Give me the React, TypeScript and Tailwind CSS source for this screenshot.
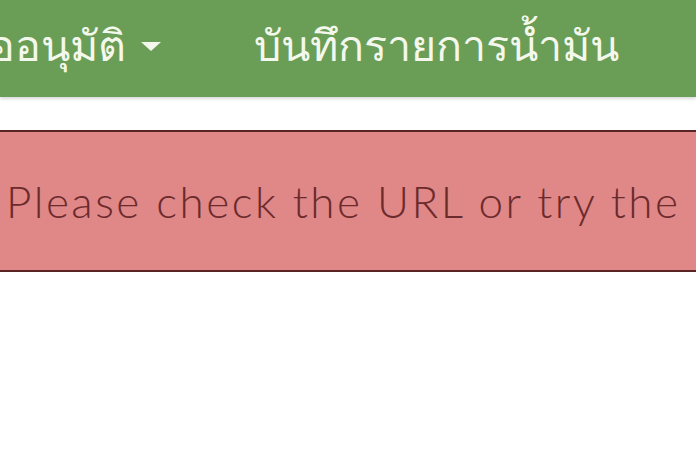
export default function App() {
  return (
    <div className="w-full h-[464px] bg-white overflow-hidden font-['Lato','Noto_Sans',sans-serif]">
      <nav className="h-[97px] bg-[#6a9e56] flex items-center whitespace-nowrap text-[#f4f8ec] text-[43px] shadow-[0_2px_3px_rgba(0,0,0,0.15)] overflow-hidden">
        <div className="flex items-center -ml-[34px] -mt-[7px]">
          <span>รออนุมัติ</span>
          <svg width="22" height="11" viewBox="0 0 22 11" className="ml-[14px] mt-[3px]">
            <path d="M1 1 L21 1 L11 10 Z" fill="#f4f8ec" />
          </svg>
        </div>
        <div className="ml-[92px] -mt-[7px]">บันทึกรายการน้ำมัน</div>
      </nav>
      <div className="mt-[33px] -mx-4 h-[142px] border-2 border-[#5b2424] bg-[#e08787] flex items-center pl-[20px] overflow-hidden">
        <p className="whitespace-nowrap text-[44px] font-light text-[#6b2a2c] tracking-[2.5px]">
          Please check the URL or try the
        </p>
      </div>
    </div>
  );
}
